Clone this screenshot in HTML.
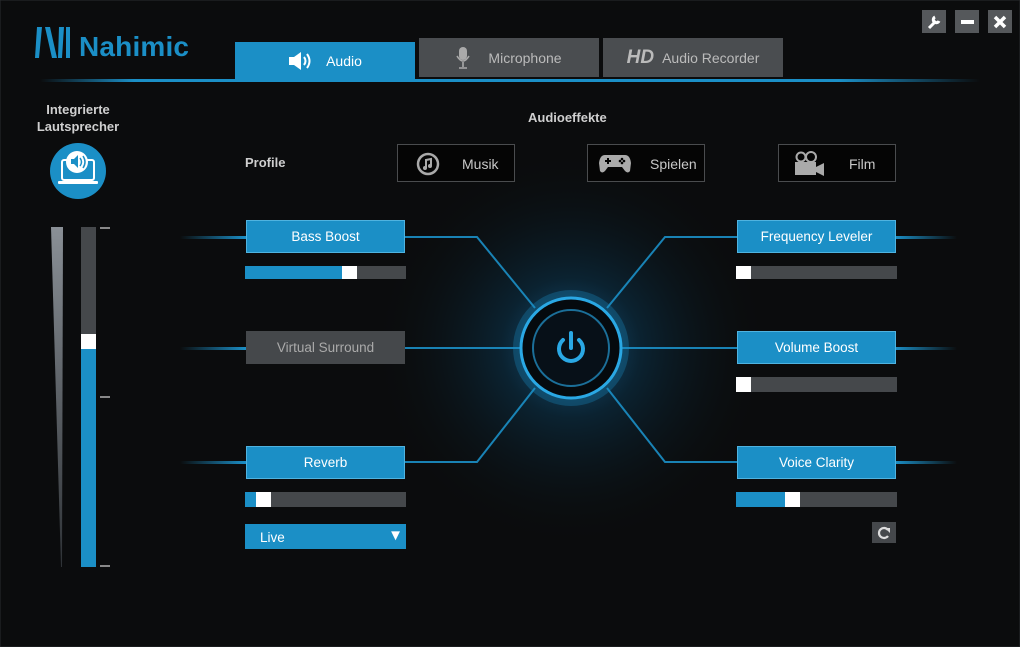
<!DOCTYPE html>
<html><head><meta charset="utf-8"><style>
*{margin:0;padding:0;box-sizing:border-box}
body{width:1020px;height:647px;background:#0b0c0d;overflow:hidden;position:relative;font-family:"Liberation Sans",sans-serif;color:#d8d8d8}
.a{position:absolute}
.tab{position:absolute;font-size:14px;display:flex;align-items:center;justify-content:center}
.btn{position:absolute;background:#1b8fc6;color:#fff;font-size:13.5px;display:flex;align-items:center;justify-content:center;border:1px solid #4fb3e0}
.pb{position:absolute;border:1px solid #4a4c4e;background:#050505;color:#c8c8c8;font-size:14px;height:38px;width:118px}
.sl{position:absolute;background:#45484b;height:13px;width:161px}
.sl i{position:absolute;top:0;height:13px;background:#1b8fc6;left:0}
.sl b{position:absolute;top:0;height:13px;width:15px;background:#fff}
.wb{position:absolute;top:10px;width:24px;height:23px;background:#55585b;color:#fff;font-weight:bold;display:flex;align-items:center;justify-content:center;font-size:16px}
</style></head><body>
<svg class="a" style="left:0;top:0" width="1020" height="647">
<defs>
<radialGradient id="g" cx="571" cy="348" r="200" gradientUnits="userSpaceOnUse"><stop offset="0" stop-color="#126090" stop-opacity=".95"/><stop offset=".35" stop-color="#0b2c40" stop-opacity=".7"/><stop offset="1" stop-color="#0b0c0d" stop-opacity="0"/></radialGradient>
<linearGradient id="tl" x1="0" x2="1"><stop offset="0" stop-color="#1b8fc6" stop-opacity="0"/><stop offset=".1" stop-color="#1b8fc6"/><stop offset=".85" stop-color="#1b8fc6"/><stop offset="1" stop-color="#1b8fc6" stop-opacity="0"/></linearGradient>
<linearGradient id="lg" x1="0" x2="1"><stop offset="0" stop-color="#1b8fc6" stop-opacity="0"/><stop offset="1" stop-color="#1b8fc6"/></linearGradient>
<linearGradient id="rg" x1="0" x2="1"><stop offset="0" stop-color="#1b8fc6"/><stop offset="1" stop-color="#1b8fc6" stop-opacity="0"/></linearGradient>
<linearGradient id="wd" x1="0" y1="0" x2="0" y2="1"><stop offset="0" stop-color="#8a9096"/><stop offset="1" stop-color="#2e3236"/></linearGradient>
</defs>
<rect x="0" y="0" width="1020" height="647" fill="none" stroke="#2a2c2e"/>
<ellipse cx="571" cy="348" rx="270" ry="230" fill="url(#g)"/>
<rect x="40" y="79" width="940" height="3" fill="url(#tl)"/>
<g stroke="#1b8fc6" stroke-width="2" fill="none" opacity=".9">
<polyline points="404,237 477,237 535,308"/>
<polyline points="737,237 665,237 607,308"/>
<polyline points="404,462 477,462 535,388"/>
<polyline points="737,462 665,462 607,388"/>
<line x1="404" y1="348" x2="522" y2="348"/>
<line x1="620" y1="348" x2="737" y2="348"/>
</g>
<g>
<rect x="180" y="236" width="66" height="3" fill="url(#lg)"/>
<rect x="180" y="347" width="66" height="3" fill="url(#lg)"/>
<rect x="180" y="461" width="66" height="3" fill="url(#lg)"/>
<rect x="895" y="236" width="62" height="3" fill="url(#rg)"/>
<rect x="895" y="347" width="62" height="3" fill="url(#rg)"/>
<rect x="895" y="461" width="62" height="3" fill="url(#rg)"/>
</g>
<circle cx="571" cy="348" r="58" fill="#1b8fc6" opacity=".3"/>
<circle cx="571" cy="348" r="50" fill="#050a0e" stroke="#2aa8e4" stroke-width="3"/>
<circle cx="571" cy="348" r="38" fill="#071018" stroke="#1b6f99" stroke-width="2"/>
<path d="M563 340 A12 12 0 1 0 579 340" stroke="#2aa8e4" stroke-width="4" fill="none" stroke-linecap="round"/>
<line x1="571" y1="333" x2="571" y2="348" stroke="#2aa8e4" stroke-width="4" stroke-linecap="round"/>
<!-- logo -->
<g fill="#1b8fc6"><polygon points="37,27 42,27 39,58 35,58"/><polygon points="45,27 50,27 57,58 52,58"/><polygon points="59,27 64,27 62,58 58,58"/><polygon points="66,27 70,27 70,58 66,58"/></g>
<text x="79" y="56" font-family="Liberation Sans" font-weight="bold" font-size="28" fill="#1b8fc6" textLength="110">Nahimic</text>
<!-- left slider -->
<polygon points="51,227 63,227 62,567 61,567" fill="url(#wd)"/>
<rect x="81" y="227" width="15" height="340" fill="#45484b"/>
<rect x="81" y="348" width="15" height="219" fill="#1b8fc6"/>
<rect x="81" y="334" width="15" height="15" fill="#fff"/>
<g fill="#888"><rect x="100" y="227" width="10" height="2"/><rect x="100" y="396" width="10" height="2"/><rect x="100" y="565" width="10" height="2"/></g>
<circle cx="78" cy="171" r="28" fill="#1b8fc6"/>
<rect x="62" y="160" width="32" height="20" rx="2" fill="none" stroke="#fff" stroke-width="2"/>
<rect x="58" y="181" width="40" height="3" rx="1" fill="#fff"/>
<circle cx="77" cy="162" r="11" fill="#fff"/>
<path d="M71 159h3l4-4v13l-4-4h-3z" fill="#1b8fc6"/>
<path d="M80 158q3 4 0 8M83 156q4 6 0 12" stroke="#1b8fc6" stroke-width="1.5" fill="none"/>
</svg>
<div class="tab" style="left:235px;top:42px;width:180px;height:38px;background:#1b8fc6;color:#fff"><svg width="26" height="20" style="margin-right:12px"><path d="M1 6h5l7-5v18l-7-5H1z" fill="#fff"/><path d="M16 6q3 4 0 8M19 3q5 7 0 14" stroke="#fff" stroke-width="2" fill="none"/></svg>Audio</div>
<div class="tab" style="left:419px;top:38px;width:180px;height:39px;background:#4a4d50;color:#bbb"><svg width="14" height="22" style="margin-right:18px"><rect x="3" y="0" width="8" height="13" rx="4" fill="#aaa"/><path d="M1 9q6 10 12 0M7 15v5M3 21h8" stroke="#aaa" stroke-width="1.6" fill="none"/></svg>Microphone</div>
<div class="tab" style="left:603px;top:38px;width:180px;height:39px;background:#4a4d50;color:#bbb"><b style="font-style:italic;font-size:19px;color:#bbb;margin-right:8px">HD</b>Audio Recorder</div>
<div class="wb" style="left:922px"><svg width="16" height="16"><path d="M3 14l7-7M9 3a3 3 0 1 0 4 4" stroke="#fff" stroke-width="3" fill="none"/></svg></div>
<div class="wb" style="left:955px"><div style="width:13px;height:4px;background:#fff"></div></div>
<div class="wb" style="left:988px"><svg width="14" height="14"><path d="M2 2l10 10M12 2L2 12" stroke="#fff" stroke-width="3.5"/></svg></div>
<div class="a" style="left:18px;top:101px;width:120px;text-align:center;font-weight:bold;font-size:13px;line-height:17px;color:#cfcfcf">Integrierte<br>Lautsprecher</div>
<div class="a" style="left:245px;top:155px;font-weight:bold;font-size:13px;color:#cfcfcf">Profile</div>
<div class="a" style="left:528px;top:110px;font-weight:bold;font-size:13px;color:#cfcfcf">Audioeffekte</div>
<div class="pb" style="left:397px;top:144px"><svg class="a" style="left:18px;top:7px" width="24" height="24"><circle cx="12" cy="12" r="10" fill="none" stroke="#aaa" stroke-width="2.5"/><path d="M10 16V8l5-1v7" stroke="#aaa" stroke-width="2" fill="none"/><circle cx="9" cy="16" r="2" fill="#aaa"/><circle cx="14" cy="14" r="2" fill="#aaa"/></svg><span class="a" style="left:64px;top:11px">Musik</span></div>
<div class="pb" style="left:587px;top:144px"><svg class="a" style="left:11px;top:9px" width="32" height="20"><path d="M6 1h20q5 0 6 8l-1 8q-2 3-5 0l-3-4H9l-3 4q-3 3-5 0L0 9q1-8 6-8z" fill="#aaa"/><rect x="6" y="6" width="6" height="2" fill="#000"/><rect x="8" y="4" width="2" height="6" fill="#000"/><circle cx="23" cy="5" r="1.3" fill="#000"/><circle cx="23" cy="9" r="1.3" fill="#000"/><circle cx="21" cy="7" r="1.3" fill="#000"/><circle cx="25" cy="7" r="1.3" fill="#000"/></svg><span class="a" style="left:62px;top:11px">Spielen</span></div>
<div class="pb" style="left:778px;top:144px"><svg class="a" style="left:15px;top:6px" width="32" height="26"><circle cx="7" cy="6" r="4.5" fill="none" stroke="#aaa" stroke-width="2"/><circle cx="17" cy="6" r="5" fill="none" stroke="#aaa" stroke-width="2"/><rect x="1" y="11" width="21" height="13" fill="#aaa"/><path d="M22 16l8-4v13l-8-4z" fill="#aaa"/></svg><span class="a" style="left:70px;top:11px">Film</span></div>
<div class="btn" style="left:246px;top:220px;width:159px;height:33px">Bass Boost</div>
<div class="btn" style="left:246px;top:331px;width:159px;height:33px;background:#45484b;border-color:#45484b;color:#aaa">Virtual Surround</div>
<div class="btn" style="left:246px;top:446px;width:159px;height:33px">Reverb</div>
<div class="btn" style="left:737px;top:220px;width:159px;height:33px">Frequency Leveler</div>
<div class="btn" style="left:737px;top:331px;width:159px;height:33px">Volume Boost</div>
<div class="btn" style="left:737px;top:446px;width:159px;height:33px">Voice Clarity</div>
<div class="sl" style="left:245px;top:266px"><i style="width:100px"></i><b style="left:97px"></b></div>
<div class="sl" style="left:245px;top:492px;height:15px"><i style="width:15px;height:15px"></i><b style="left:11px;height:15px"></b></div>
<div class="sl" style="left:736px;top:266px"><b style="left:0"></b></div>
<div class="sl" style="left:736px;top:377px;height:15px"><b style="left:0;height:15px"></b></div>
<div class="sl" style="left:736px;top:492px;height:15px"><i style="width:50px;height:15px"></i><b style="left:49px;height:15px"></b></div>
<div class="a" style="left:245px;top:524px;width:161px;height:25px;background:#1b8fc6;color:#fff;font-size:13.5px;padding:6px 0 0 15px">Live<span class="a" style="right:3px;top:3px;font-size:15px">▼</span></div>
<div class="a" style="left:872px;top:522px;width:24px;height:21px;background:#45484b"><svg width="24" height="21"><path d="M16 8a5 5 0 1 0 0 6" stroke="#ddd" stroke-width="2.2" fill="none"/><path d="M13 6h5v5z" fill="#ddd"/></svg></div>
</body></html>
